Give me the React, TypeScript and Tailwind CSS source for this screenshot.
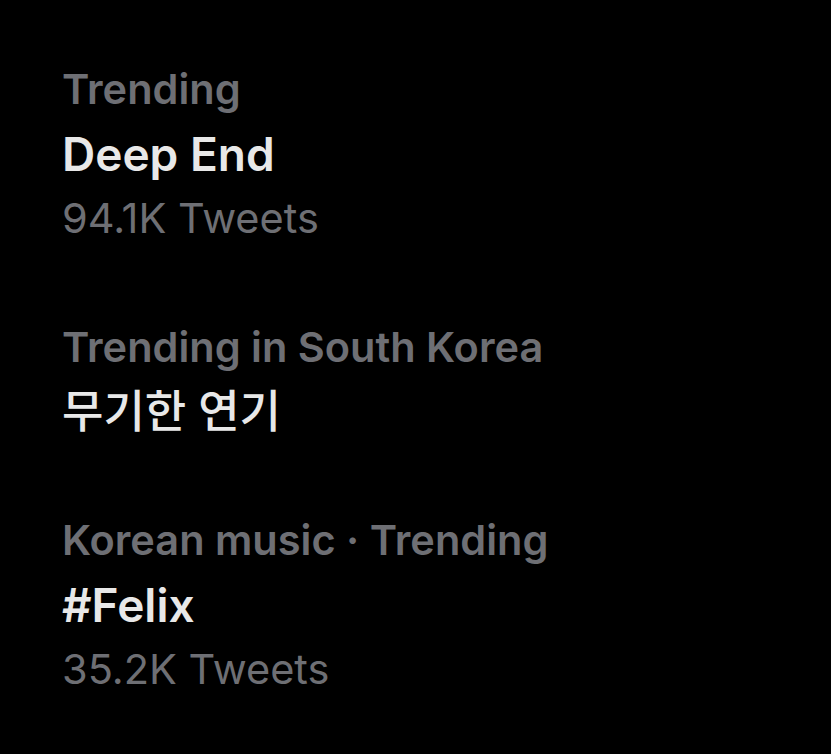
import React from "react";

type Trend = {
  label: string;
  title: string;
  count?: string;
  korean?: boolean;
};

const trends: Trend[] = [
  { label: "Trending", title: "Deep End", count: "94.1K Tweets" },
  { label: "Trending in South Korea", title: "무기한 연기", korean: true },
  { label: "Korean music · Trending", title: "#Felix", count: "35.2K Tweets" },
];

const TrendItem = ({ label, title, count, korean }: Trend) => {
  return (
    <div className="flex flex-col">
      <span className="text-[41.5px] leading-[66px] font-semibold text-[#6e6f74] whitespace-nowrap">
        {label}
      </span>
      <span
        className={
          korean
            ? "text-[45px] leading-[64px] font-medium text-[#e8e8e8] whitespace-nowrap"
            : "text-[46px] leading-[64px] font-semibold text-[#e8e8e8] whitespace-nowrap"
        }
      >
        {title}
      </span>
      {count && (
        <span className="text-[41.5px] leading-[65px] font-normal text-[#6e6f74] whitespace-nowrap">
          {count}
        </span>
      )}
    </div>
  );
};

export default function App() {
  return (
    <div
      className="w-[831px] h-[754px] bg-black overflow-hidden pl-[62px] pt-[56px] flex flex-col gap-[63px]"
      style={{ fontFamily: 'Inter, "Noto Sans CJK KR", sans-serif' }}
    >
      {trends.map((t) => (
        <TrendItem key={t.title} {...t} />
      ))}
    </div>
  );
}
